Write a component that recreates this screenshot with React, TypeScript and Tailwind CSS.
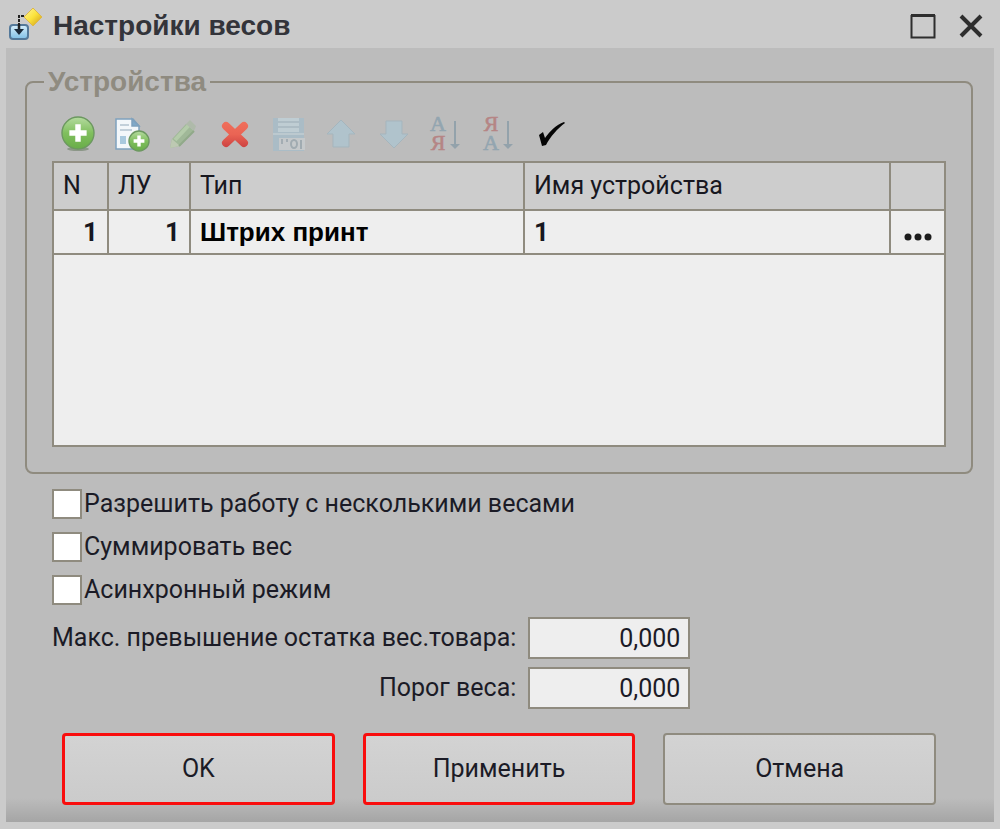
import React, { useState } from 'react';

interface ToolButton {
  label: string;
  icon: React.ReactNode;
}

interface Device {
  n: number;
  lu: number;
  type: string;
  name: string;
}

const DEVICES: Device[] = [{ n: 1, lu: 1, type: 'Штрих принт', name: '1' }];

const OPTIONS = [
  'Разрешить работу с несколькими весами',
  'Суммировать вес',
  'Асинхронный режим',
];

function AppIcon() {
  return (
    <svg width="42" height="36" viewBox="-1 0 42 36" aria-hidden="true">
      <defs>
        <linearGradient id="gem" x1="0" y1="0" x2="1" y2="1">
          <stop offset="0" stopColor="#fff6a0" />
          <stop offset="0.5" stopColor="#fbe23a" />
          <stop offset="1" stopColor="#c9961c" />
        </linearGradient>
        <linearGradient id="tray" x1="0" y1="0" x2="0" y2="1">
          <stop offset="0" stopColor="#d8effb" />
          <stop offset="1" stopColor="#7fbfe6" />
        </linearGradient>
      </defs>
      <rect x="3" y="17" width="18" height="14" rx="3" fill="url(#tray)" stroke="#54799a" strokeWidth="2" />
      <path d="M12 22V8h10" fill="none" stroke="#222" strokeWidth="2" strokeDasharray="3 1" />
      <path d="M12 16v8" stroke="#222" strokeWidth="2.5" />
      <path d="M7 21h10l-5 6z" fill="#1c2a3a" />
      <path d="M26 0l9 9-9 9-9-9z" fill="url(#gem)" stroke="#dcb74c" strokeWidth="1" />
    </svg>
  );
}

function PlusBall({ x, y, r }: { x: number; y: number; r: number }) {
  const arm = r * 0.54;
  return (
    <g>
      <circle cx={x} cy={y} r={r} fill="url(#ball)" stroke="#6c9860" strokeWidth="1.4" />
      <path
        d={`M${x - arm} ${y}H${x + arm}M${x} ${y - arm}V${y + arm}`}
        stroke="#fff"
        strokeWidth={r * 0.34}
      />
    </g>
  );
}

function AddIcon() {
  return (
    <svg width="38" height="38" viewBox="0 0 38 38">
      <defs>
        <linearGradient id="ball" x1="0" y1="0" x2="0" y2="1">
          <stop offset="0" stopColor="#b5dba0" />
          <stop offset="0.5" stopColor="#80bf5e" />
          <stop offset="1" stopColor="#69ad49" />
        </linearGradient>
      </defs>
      <ellipse cx="19" cy="34" rx="11" ry="2" fill="#8c9788" />
      <PlusBall x={19} y={18} r={16} />
    </svg>
  );
}

function AddCopyIcon() {
  return (
    <svg width="38" height="38" viewBox="0 0 38 38">
      <path d="M4 4h17l6 7v23H4z" fill="#f3f7fa" stroke="#7fa1bd" strokeWidth="1.5" />
      <path d="M20 4v7h7z" fill="#7fa9c9" stroke="#7fa1bd" strokeWidth="1.5" />
      <path d="M8 10h9M8 15h12" stroke="#c3d0da" strokeWidth="2" />
      <path d="M8 21h6v8H8z" fill="#a9c9de" />
      <PlusBall x={27} y={26} r={10} />
    </svg>
  );
}

function EditIcon() {
  return (
    <svg width="38" height="38" viewBox="0 0 38 38">
      <path d="M8 24L22 9l8 7-14 15-10 2z" fill="#a0b898" />
      <path d="M11 25L25 10" stroke="#b4cbaa" strokeWidth="4" />
      <path d="M22 9l4-4 6 6-2 5z" fill="#afbaaa" />
      <path d="M8 24l8 7-10 2z" fill="#bdc9b2" />
      <path d="M15 31L30 16" stroke="#91a98a" strokeWidth="2" />
    </svg>
  );
}

function DeleteIcon() {
  return (
    <svg width="38" height="38" viewBox="0 0 38 38">
      <defs>
        <linearGradient id="cross" x1="0" y1="6" x2="0" y2="33" gradientUnits="userSpaceOnUse">
          <stop offset="0" stopColor="#f0705c" />
          <stop offset="0.5" stopColor="#ea6454" />
          <stop offset="1" stopColor="#cb4040" />
        </linearGradient>
      </defs>
      <path d="M9 11l18 17M27 11L9 28" stroke="url(#cross)" strokeWidth="8" strokeLinecap="round" />
    </svg>
  );
}

function FinishEditIcon() {
  return (
    <svg width="38" height="38" viewBox="0 0 38 38">
      <path d="M3 3h31v33H3z" fill="#aabcc6" />
      <path d="M8 3h21v14H8z" fill="#bfcdd3" />
      <path d="M8 7h21M8 12h21" stroke="#adbcc4" strokeWidth="2" />
      <path d="M3 19h31" stroke="#bcc9cf" strokeWidth="2" />
      <path d="M9 23h26v12H9z" fill="#c5c9cb" />
      <path d="M12 24v5M17 24v3" stroke="#a3adb3" strokeWidth="2" />
      <ellipse cx="24" cy="29" rx="3" ry="4" fill="none" stroke="#a0abb1" strokeWidth="2" />
      <path d="M31 25v9" stroke="#a0abb1" strokeWidth="2" />
    </svg>
  );
}

function ArrowIcon({ down = false }: { down?: boolean }) {
  return (
    <svg width="38" height="38" viewBox="0 0 38 38" className={down ? 'rotate-180' : ''}>
      <path
        d="M19 5l14 14h-6v13H11V19H5z"
        fill="#b0c3cc"
        stroke="#a5b5bd"
        strokeWidth="1"
        strokeLinejoin="round"
      />
    </svg>
  );
}

function SortIcon({ top, bottom, topColor, bottomColor }: {
  top: string;
  bottom: string;
  topColor: string;
  bottomColor: string;
}) {
  return (
    <svg width="38" height="46" viewBox="0 0 38 46">
      <g fontFamily="Liberation Serif, serif" fontSize="22" textAnchor="middle" strokeWidth="0.6">
        <text x="11" y="20" fill={topColor} stroke={topColor}>{top}</text>
        <text x="11" y="39" fill={bottomColor} stroke={bottomColor}>{bottom}</text>
      </g>
      <path d="M28 10v26" stroke="#93a2ab" strokeWidth="2" />
      <path d="M23 33h10l-5 5z" fill="#93a2ab" />
    </svg>
  );
}

function CheckIcon() {
  return (
    <svg width="38" height="38" viewBox="0 0 38 38">
      <path d="M6 20l4-3 2 6C17 16 23 10 31 7l1 1C25 13 17 22 13 30l-4 1z" fill="#050505" />
    </svg>
  );
}

const TOOLS: ToolButton[] = [
  { label: 'Добавить', icon: <AddIcon /> },
  { label: 'Добавить копированием', icon: <AddCopyIcon /> },
  { label: 'Изменить', icon: <EditIcon /> },
  { label: 'Удалить', icon: <DeleteIcon /> },
  { label: 'Закончить редактирование', icon: <FinishEditIcon /> },
  { label: 'Переместить вверх', icon: <ArrowIcon /> },
  { label: 'Переместить вниз', icon: <ArrowIcon down /> },
  {
    label: 'Сортировать по возрастанию',
    icon: <SortIcon top="А" bottom="Я" topColor="#93a5b0" bottomColor="#b58585" />,
  },
  {
    label: 'Сортировать по убыванию',
    icon: <SortIcon top="Я" bottom="А" topColor="#b58585" bottomColor="#93a5b0" />,
  },
  { label: 'Выбрать', icon: <CheckIcon /> },
];

function TitleBar() {
  return (
    <header className="flex h-12 items-center pt-1">
      <AppIcon />
      <h1 className="ml-[5px] flex-1 font-['Liberation_Sans',sans-serif] text-[28px] leading-8 font-bold text-[#33343a]">
        Настройки весов
      </h1>
      <button aria-label="Развернуть" className="flex size-9 items-center justify-center">
        <svg width="26" height="26" viewBox="0 0 26 26">
          <path d="M1 2.5h24" stroke="#2e2e2e" strokeWidth="3" />
          <path d="M1.5 2v22.5h23V2" fill="none" stroke="#2e2e2e" strokeWidth="2" />
        </svg>
      </button>
      <button aria-label="Закрыть" className="mr-[5px] ml-3 flex size-9 items-center justify-center">
        <svg width="26" height="26" viewBox="0 0 26 26">
          <path d="M3 3l20 20M23 3L3 23" stroke="#2e2e2e" strokeWidth="4" />
        </svg>
      </button>
    </header>
  );
}

function DeviceTable() {
  return (
    <div className="h-[286px] border-2 border-[#8f8b7f] bg-[#eeeeee]">
      <table className="w-full table-fixed border-collapse text-left leading-8 text-[#17171f]">
        <colgroup>
          <col className="w-[54px]" />
          <col className="w-[82px]" />
          <col className="w-[334px]" />
          <col />
          <col className="w-[54px]" />
        </colgroup>
        <thead>
          <tr className="h-[47px] border-b-2 border-[#8f8b7f] bg-[#cdcdcd] *:border-r-2 *:border-[#8f8b7f] *:px-[9px] *:font-normal *:last:border-r-0">
            <th>N</th>
            <th>ЛУ</th>
            <th>Тип</th>
            <th>Имя устройства</th>
            <th aria-label="Выбор" />
          </tr>
        </thead>
        <tbody>
          {DEVICES.map((d) => (
            <tr
              key={d.n}
              className="h-11 border-b-2 border-[#8f8b7f] text-[26px] *:border-r-2 *:border-[#8f8b7f] *:px-[9px] *:font-bold *:last:border-r-0"
            >
              <td className="text-right">{d.n}</td>
              <td className="text-right">{d.lu}</td>
              <td className="font-['Liberation_Sans',sans-serif] text-black">{d.type}</td>
              <td>{d.name}</td>
              <td>
                <button aria-label="Открыть" className="flex w-full justify-center">
                  <svg width="30" height="32" viewBox="0 0 30 32" fill="#1c1c1c">
                    <circle cx="5" cy="21" r="3.5" />
                    <circle cx="15" cy="21" r="3.5" />
                    <circle cx="25" cy="21" r="3.5" />
                  </svg>
                </button>
              </td>
            </tr>
          ))}
        </tbody>
      </table>
    </div>
  );
}

function NumberField({ id, label, value }: { id: string; label: string; value: string }) {
  return (
    <>
      <label htmlFor={id} className="text-right whitespace-nowrap">
        {label}
      </label>
      <input
        id={id}
        type="text"
        defaultValue={value}
        className="h-[42px] w-[162px] border-2 border-[#8f8b7f] bg-[#eeeeee] px-2 text-right"
      />
    </>
  );
}

export default function App() {
  const [checked, setChecked] = useState<boolean[]>(OPTIONS.map(() => false));

  const toggle = (idx: number) => setChecked((prev) => prev.map((v, i) => (i === idx ? !v : v)));

  return (
    <div className="flex min-h-screen flex-col bg-[#cbcbcb] px-[6px] pb-[7px] font-['Roboto','Liberation_Sans',sans-serif]">
      <TitleBar />

      <main className="flex flex-1 flex-col bg-[linear-gradient(to_top,#a5a5a5,#bcbcbc_24px)] text-[25px] leading-8 text-[#1b1b26]">
        <fieldset className="mt-[18px] mr-[21px] ml-[19px] rounded-lg border-2 border-[#8f8b7f] px-[25px] pb-[25px]">
          <legend className="-ml-2 px-1 font-['Liberation_Sans',sans-serif] text-[28px] font-bold text-[#8f8b80]">
            Устройства
          </legend>
          <div className="mt-[11px] mb-[2px] flex w-[526px]">
            {TOOLS.map((tool) => (
              <button key={tool.label} aria-label={tool.label} className="flex h-[50px] flex-1 items-center justify-center">
                {tool.icon}
              </button>
            ))}
          </div>
          <DeviceTable />
        </fieldset>

        <div className="mt-[14px] ml-[46px] flex flex-col gap-[11px]">
          {OPTIONS.map((label, i) => (
            <label key={label} className="flex h-8 items-center gap-[2px] self-start">
              <input
                type="checkbox"
                checked={checked[i]}
                onChange={() => toggle(i)}
                className="size-[30px] appearance-none border-2 border-[#8f8b7f] bg-white checked:bg-[#8f8b7f]"
              />
              {label}
            </label>
          ))}
        </div>

        <div className="mt-[11px] ml-[46px] grid grid-cols-[auto_auto] items-center justify-start gap-x-3 gap-y-2">
          <NumberField id="max-excess" label="Макс. превышение остатка вес.товара:" value="0,000" />
          <NumberField id="threshold" label="Порог веса:" value="0,000" />
        </div>

        <div className="mt-6 mr-[58px] mb-4 ml-[56px] grid grid-cols-3 gap-7">
          <button className="h-[72px] rounded-sm border-3 border-[#f90d0d] bg-linear-to-b from-[#d3d3d3] to-[#cbcbcb]">OK</button>
          <button className="h-[72px] rounded-sm border-3 border-[#f90d0d] bg-linear-to-b from-[#d3d3d3] to-[#cbcbcb]">
            Применить
          </button>
          <button className="h-[72px] rounded-sm border-2 border-[#8f8b7f] bg-linear-to-b from-[#d3d3d3] to-[#cbcbcb]">
            Отмена
          </button>
        </div>
      </main>
    </div>
  );
}
